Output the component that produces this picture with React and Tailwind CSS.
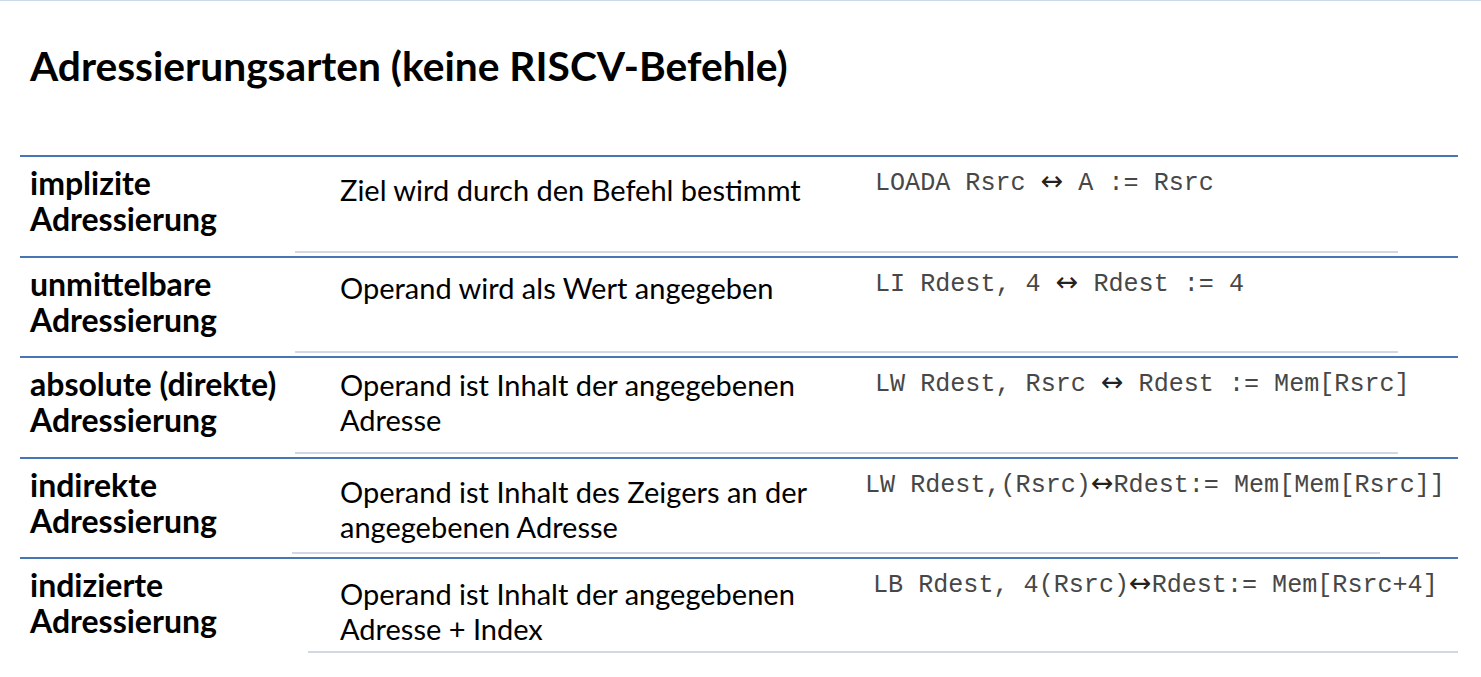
import React from "react";

// rows of the table: label / description / code (code split at the arrow)
const rows = [
    {
        label: ["implizite", "Adressierung"],
        desc: ["Ziel wird durch den Befehl bestimmt"],
        code: ["LOADA Rsrc ", " A := Rsrc"],
        h: "h-[101px]",
        descCls: "pt-[15px]",
        codeCls: "ml-0",
        line: "ml-[275px] w-[1103px]",
    },
    {
        label: ["unmittelbare", "Adressierung"],
        desc: ["Operand wird als Wert angegeben"],
        code: ["LI Rdest, 4 ", " Rdest := 4"],
        h: "h-[100px]",
        descCls: "pt-[12px]",
        codeCls: "ml-0",
        line: "ml-[275px] w-[1103px]",
    },
    {
        label: ["absolute (direkte)", "Adressierung"],
        desc: ["Operand ist Inhalt der angegebenen", "Adresse"],
        code: ["LW Rdest, Rsrc ", " Rdest := Mem[Rsrc]"],
        h: "h-[101px]",
        descCls: "pt-[9px]",
        codeCls: "ml-0",
        line: "ml-[275px] w-[1103px]",
    },
    {
        label: ["indirekte", "Adressierung"],
        desc: ["Operand ist Inhalt des Zeigers an der", "angegebenen Adresse"],
        code: ["LW Rdest,(Rsrc)", "Rdest:= Mem[Mem[Rsrc]]"],
        h: "h-[100px]",
        descCls: "pt-[15px]",
        codeCls: "-ml-[10px]",
        line: "ml-[272px] w-[1088px]",
    },
    {
        label: ["indizierte", "Adressierung"],
        desc: ["Operand ist Inhalt der angegebenen", "Adresse + Index"],
        code: ["LB Rdest, 4(Rsrc)", "Rdest:= Mem[Rsrc+4]"],
        h: "h-[99px]",
        descCls: "pt-[17px]",
        codeCls: "-ml-[2px]",
        line: "ml-[288px] w-[1150px]",
    },
];

export default function App() {
    return (
        <div className="w-[1481px] h-[677px] bg-white border-t border-[#c9dbeb] font-['Lato',sans-serif] text-black overflow-hidden">
            {/* Title */}
            <h1 className="pl-[30px] pt-[39px] text-[40.7px] leading-[52px] font-bold">
                Adressierungsarten (keine RISCV-Befehle)
            </h1>

            {/* Table */}
            <div className="ml-[20px] w-[1438px] mt-[63px]">
                {rows.map((row, i) => (
                    <div key={i} className={`${row.h} flex flex-col border-t-2 border-[#4677b4]`}>
                        <div className="flex flex-1">
                            <div className="w-[320px] pl-[10px] pt-[8px] text-[32px] leading-[36px] font-bold">
                                {row.label.map((l) => (
                                    <div key={l}>{l}</div>
                                ))}
                            </div>
                            <div className={`w-[535px] ${row.descCls} text-[29px] leading-[35px]`}>
                                {row.desc.map((d) => (
                                    <div key={d}>{d}</div>
                                ))}
                            </div>
                            <div className={`flex-1 pt-[8px] ${row.codeCls} font-['Liberation_Mono',monospace] text-[25.1px] leading-[32px] text-[#474747] whitespace-pre`}>
                                {row.code[0]}
                                <span className="font-['DejaVu_Sans',sans-serif] text-[27px] text-[#222]">↔</span>
                                {row.code[1]}
                            </div>
                        </div>
                        <div className={`${row.line} h-[2px] bg-[#d3d7e3] mb-[3px]`} />
                    </div>
                ))}
            </div>
        </div>
    );
}
